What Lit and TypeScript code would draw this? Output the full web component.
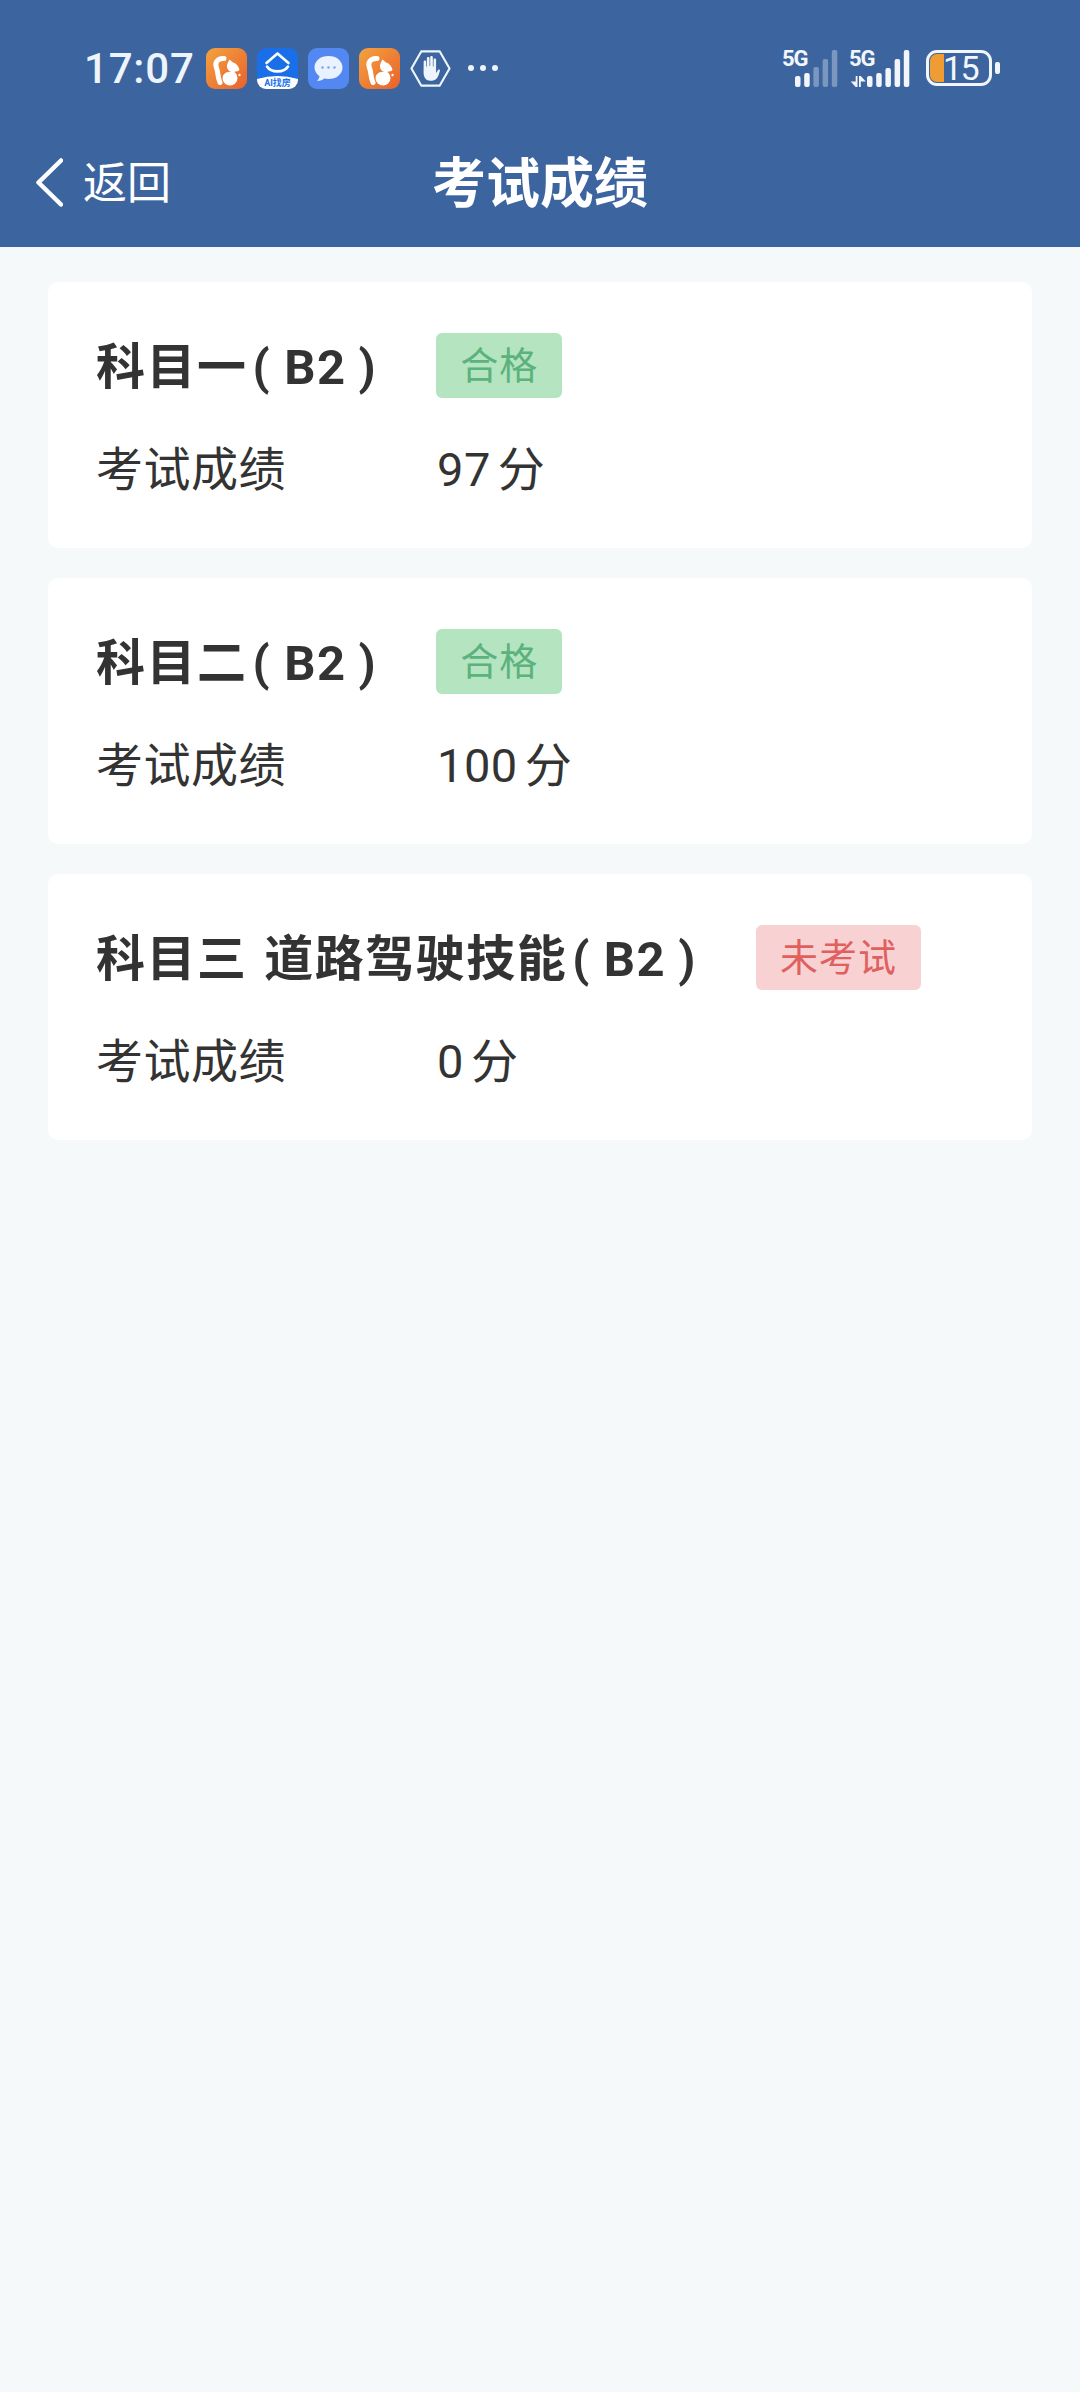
import { LitElement, html, css, svg } from 'lit';

const results = [
	{ name: '科目一', status: '合格', pass: true, score: '97' },
	{ name: '科目二', status: '合格', pass: true, score: '100' },
	{ name: '科目三 道路驾驶技能', status: '未考试', pass: false, score: '0' },
];

// squirrel logo, used twice in the notification row
const ucIcon = (id: string) => html`<svg class="app" viewBox="0 0 41 41">
	<defs>
		<linearGradient id=${id} x1="0" y1="0" x2="1" y2="1">
			<stop offset="0" stop-color="#f3a23f"></stop>
			<stop offset="1" stop-color="#e9612c"></stop>
		</linearGradient>
	</defs>
	<rect width="41" height="41" rx="9" fill="url(#${id})"></rect>
	<path fill="none" stroke="#fff" stroke-width="5" stroke-linecap="round" d="M18 10.500C11 10 8.500 15 10.500 20c2 4.500.5 8 3.500 14.500"></path>
	<circle cx="24" cy="30" r="7.500" fill="#fff"></circle>
	<path fill="none" stroke="#ec7a33" stroke-width="1.600" stroke-linecap="round" d="M17 26c2-3 5-3.500 8-3"></path>
	<path fill="#fff" d="M23.500 11.500l3.500 3c3 .5 5 3 6.500 7l-1 1.500-5 1c-3 .2-6-1.500-6.500-5-.3-2.500 1-5 2.500-7.500z"></path>
	<circle cx="33.500" cy="27" r="1.200" fill="#fff"></circle>
</svg>`;

const aiIcon = html`<svg class="app" viewBox="0 0 41 41">
	<rect width="41" height="41" rx="9" fill="#1a6fe8"></rect>
	<path fill="none" stroke="#fff" stroke-width="2.600" stroke-linecap="round" stroke-linejoin="round" d="M9.500 15L20.500 5.500l11 9.500"></path>
	<path fill="none" stroke="#fff" stroke-width="2.600" stroke-linecap="round" d="M10 18.500c4 6.500 17 6.500 21 0"></path>
	<path fill="#fff" d="M0 31Q20.500 25 41 31v1a9 9 0 0 1-9 9H9a9 9 0 0 1-9-9z"></path>
	<text x="20.500" y="38" font-size="9" font-weight="700" text-anchor="middle" fill="#1a6fe8" font-family="Roboto, 'Noto Sans CJK SC', sans-serif">AI找房</text>
</svg>`;

const msgIcon = html`<svg class="app" viewBox="0 0 41 41">
	<rect width="41" height="41" rx="9" fill="#5388f3"></rect>
	<path fill="#eaf2ff" d="M20.500 8c8 0 14 4.800 14 11.500S28.500 31 20.500 31c-1.500 0-3-.2-4.300-.5-1.500 1.300-4 2.500-7.200 2.500 1.300-1.300 2.300-3 2.500-4.800C8.500 26 6.500 23 6.500 19.500 6.500 12.800 12.500 8 20.500 8z"></path>
	<circle cx="14.500" cy="19.500" r="1.300" fill="#7fa5ee"></circle>
	<circle cx="20.500" cy="19.500" r="1.300" fill="#7fa5ee"></circle>
	<circle cx="26.500" cy="19.500" r="1.300" fill="#7fa5ee"></circle>
</svg>`;

const handIcon = html`<svg class="app" viewBox="0 0 42 41">
	<path fill="none" stroke="#eef4fb" stroke-width="2.200" stroke-linejoin="round" d="M11.500 3h19L40.500 20.500l-10 17.500h-19l-10-17.500z"></path>
	<path fill="#eef4fb" d="M14 13.500c0-1.600 2.600-1.600 2.600 0v5h.7v-8.500c0-1.700 2.700-1.700 2.700 0v8h.7V9c0-1.700 2.700-1.700 2.700 0v9.500h.7v-7c0-1.600 2.600-1.600 2.600 0V24c0 .8.600 1 1-.2.500-1.500 1-2.600 2.200-2.300 1.200.3.800 1.500.400 2.600-1 3.200-2 7.700-6.500 8.600-3.800.7-7.400.3-8.900-3.200-.7-1.700-1-3-1-4.500z"></path>
</svg>`;

// height of each bar, dim ones are the inactive part of the signal
const signal = (bars: number[], lit: number, x0: number) =>
	bars.map((h, i) => svg`<rect x=${x0 + i * 9.2} y=${37 - h} width="5.500" height=${h} rx="2" fill="#f2f6fc" opacity=${i < lit ? 1 : 0.35}></rect>`);

const networkIcon = html`<svg class="net" viewBox="0 -5 128 47">
	<text class="five" x="0" y="16">5G</text>
	${signal([11, 14, 20, 28, 37], 2, 13)}
	<text class="five" x="67" y="16">5G</text>
	<path fill="#f2f6fc" d="M75.500 26v11h-1.800l-5-5.500h5V26zM77 37V26h1.800l5 5.500h-5V37z"></path>
	${signal([11, 14, 19, 28, 37], 5, 85)}
</svg>`;

customElements.define('app-root', class extends LitElement {
	static styles = css`
		:host {
			display: block;
			min-height: 2392px;
			background: #f5f9fa;
			font-family: Roboto, "Noto Sans CJK SC", sans-serif;
			color: #333;
		}

		.top {
			background: #3c659f;
			color: #fff;
			height: 247px;
		}

		.status {
			height: 136px;
			padding: 0 80px 0 84px;
			box-sizing: border-box;
			display: flex;
			align-items: center;
		}

		.time {
			font-size: 42px;
			font-weight: 500;
			letter-spacing: 0.8px;
			color: #eef4fb;
			margin-right: 11px;
		}

		.apps {
			display: flex;
			align-items: center;
			gap: 10px;
		}

		.app {
			width: 41px;
			height: 41px;
			display: block;
		}

		.more {
			display: flex;
			gap: 6px;
			margin-left: 17px;
		}

		.more i {
			width: 6px;
			height: 6px;
			border-radius: 50%;
			background: #eef4fb;
		}

		.right {
			margin-left: auto;
			display: flex;
			align-items: center;
			gap: 16px;
		}

		.net {
			width: 128px;
			height: 47px;
			display: block;
		}

		.five {
			font: 700 22px Roboto, sans-serif;
			letter-spacing: -1px;
			fill: #f2f6fc;
		}

		.battery {
			display: flex;
			align-items: center;
			gap: 3px;
		}

		.cell {
			width: 66px;
			height: 36px;
			box-sizing: border-box;
			border: 3px solid #f2f6fc;
			border-radius: 11px;
			position: relative;
			display: flex;
			align-items: center;
			padding-left: 14px;
			font-size: 34px;
			letter-spacing: -1.5px;
			line-height: 30px;
			color: #f2f6fc;
		}

		.level {
			position: absolute;
			left: 1px;
			top: 1px;
			bottom: 1px;
			width: 14px;
			background: #f09c34;
			border-radius: 7px 0 0 7px;
		}

		.cell span {
			position: relative;
		}

		.nub {
			width: 5px;
			height: 12px;
			border-radius: 2px;
			background: #f2f6fc;
		}

		.nav {
			height: 92px;
			display: grid;
			grid-template-columns: 1fr auto 1fr;
			align-items: center;
		}

		.back {
			padding-left: 36px;
			display: flex;
			align-items: center;
			gap: 20px;
			font-size: 44px;
		}

		.back span {
			padding-bottom: 4px;
		}

		.back svg {
			width: 27px;
			height: 49px;
			display: block;
		}

		.title {
			font-size: 54px;
			font-weight: 700;
			padding-bottom: 6px;
		}

		.list {
			padding: 35px 48px;
			display: flex;
			flex-direction: column;
			gap: 30px;
		}

		.card {
			background: #fff;
			border-radius: 10px;
			padding: 51px 48px 47px;
			display: flex;
			flex-direction: column;
			gap: 37px;
		}

		.head {
			display: flex;
			align-items: center;
			gap: 59px;
			height: 65px;
		}

		.name {
			font-size: 49px;
			font-weight: 700;
			letter-spacing: 1.5px;
			word-spacing: 3px;
			white-space: nowrap;
			padding-bottom: 7px;
		}

		.paren {
			margin-left: 5px;
		}

		.grade {
			margin: 0 12px 0 13px;
		}

		.badge {
			height: 65px;
			box-sizing: border-box;
			padding: 0 24px 6px;
			border-radius: 6px;
			display: flex;
			align-items: center;
			font-size: 38px;
			letter-spacing: 1px;
		}

		.badge.pass {
			background: #b5e4c1;
			color: #5cb27c;
		}

		.badge.fail {
			background: #f8d2d2;
			color: #e06060;
		}

		.row {
			display: grid;
			grid-template-columns: 341px 1fr;
			align-items: center;
			height: 66px;
			box-sizing: border-box;
			padding-top: 3px;
			font-size: 47px;
			line-height: 47px;
			letter-spacing: 0.5px;
		}

		.unit {
			margin-left: 7px;
		}
	`;

	render()
	{
		return html`<div class="top">
			<div class="status">
				<span class="time">17:07</span>
				<div class="apps">
					${ucIcon('uc1')}
					${aiIcon}
					${msgIcon}
					${ucIcon('uc2')}
					${handIcon}
				</div>
				<div class="more"><i></i><i></i><i></i></div>
				<div class="right">
					${networkIcon}
					<div class="battery">
						<div class="cell"><div class="level"></div><span>15</span></div>
						<div class="nub"></div>
					</div>
				</div>
			</div>
			<div class="nav">
				<div class="back">
					<svg viewBox="0 0 27 49"><path fill="none" stroke="#fff" stroke-width="4.500" stroke-linecap="round" stroke-linejoin="round" d="M25 2.500L2.500 24.500 25 46.500"></path></svg>
					<span>返回</span>
				</div>
				<div class="title">考试成绩</div>
			</div>
		</div>
		<div class="list">
			${results.map(r => html`<div class="card">
				<div class="head">
					<span class="name">${r.name}<span class="paren">(</span><span class="grade">B2</span>)</span>
					<span class="badge ${r.pass ? 'pass' : 'fail'}">${r.status}</span>
				</div>
				<div class="row">
					<span>考试成绩</span>
					<span>${r.score}<span class="unit">分</span></span>
				</div>
			</div>`)}
		</div>`;
	}
});
